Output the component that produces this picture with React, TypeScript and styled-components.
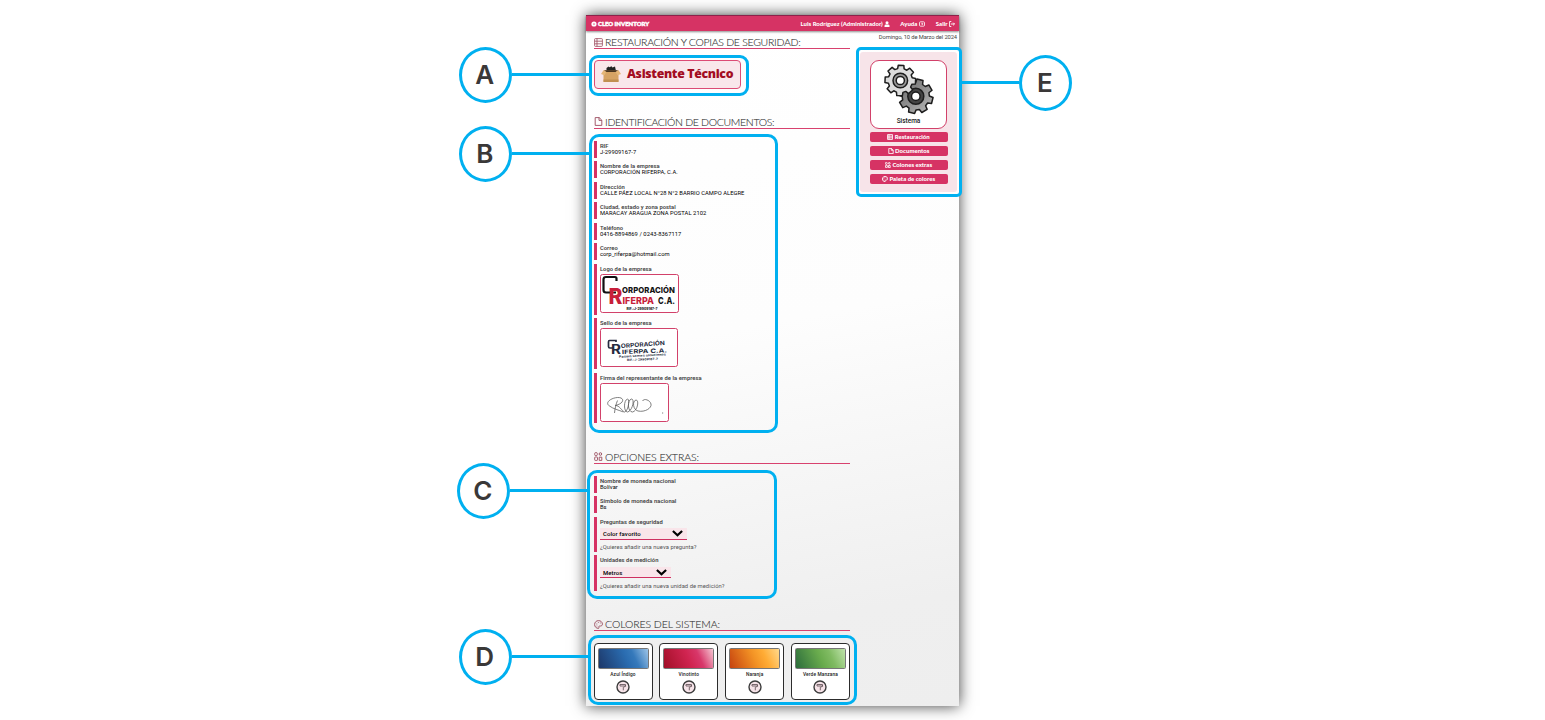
import React from 'react';
import styled, { createGlobalStyle } from 'styled-components';

const Global = createGlobalStyle`
  * { box-sizing: border-box; }
  body { margin: 0; background: #fff; }
  svg { display: block; flex: none; }
`;

const pink = '#d63364';
const blue = '#00b0f0';

const Stage = styled.div`
  position: relative;
  width: 1545px;
  height: 720px;
  overflow: hidden;
  padding: 15px 0 0 586px;
  font-family: Roboto, 'Liberation Sans', sans-serif;
`;
const Page = styled.div`
  width: 373px;
  height: 691px;
  background: linear-gradient(170deg, #fff 0%, #fdfdfd 45%, #efefef 85%, #eee 100%);
  box-shadow: 0 0 14px rgba(0, 0, 0, 0.75);
`;
const TopBar = styled.header`
  display: flex;
  align-items: center;
  height: 16px;
  padding: 1px 4px 0 5px;
  border-top: 1px solid #8d2149;
  background: ${pink};
  box-shadow: 0 1px 2px rgba(0, 0, 0, 0.45);
  color: #fff;
  font: 900 6px/8px Lato, sans-serif;
`;
const Brand = styled.div`
  display: flex;
  align-items: center;
  gap: 1px;
  margin-right: auto;
  letter-spacing: -0.03px;
  -webkit-text-stroke: 0.45px #fff;
`;
const NavItem = styled.div<{ $gap: number }>`
  display: flex;
  align-items: center;
  gap: 1.5px;
  margin-left: ${p => p.$gap}px;
  white-space: nowrap;
`;
const Body = styled.div`
  display: flex;
  justify-content: space-between;
`;
const Main = styled.main`
  width: 264px;
  padding: 5px 0 0 7.5px;
`;
const Aside = styled.aside`
  width: 100px;
  padding: 3px 2px 0 0;
`;
const DateLine = styled.div`
  height: 18px;
  color: #444;
  font-size: 5.8px;
  line-height: 7px;
  letter-spacing: -0.12px;
  text-align: right;
  white-space: nowrap;
`;
const Heading = styled.h2<{ $top?: number; $ls: number }>`
  display: flex;
  align-items: center;
  gap: 2.5px;
  height: 13px;
  margin: ${p => p.$top ?? 0}px 0 ${p => (p.$top ? 11.8 : 11)}px;
  border-bottom: 1.5px solid #d8416e;
  color: #333;
  font: 300 10.5px/12px Lato, sans-serif;
  letter-spacing: ${p => p.$ls}px;
  -webkit-text-stroke: 0.12px #444;
  white-space: nowrap;
`;
const Assistant = styled.button`
  display: flex;
  align-items: center;
  gap: 6.5px;
  width: 147px;
  height: 29px;
  padding: 0 0 1px 6px;
  border: 1.5px solid #dc4b75;
  border-radius: 4px;
  background: #f9e7eb;
  color: #a30d22;
  font: 800 12.3px/16px 'Open Sans', sans-serif;
  letter-spacing: -0.33px;
  white-space: nowrap;
`;
const Fields = styled.div`
  display: flex;
  flex-direction: column;
  gap: 3.5px;
`;
const FieldBox = styled.div<{ $h: number; $mt?: number }>`
  height: ${p => p.$h}px;
  margin-top: ${p => p.$mt ?? 0}px;
  padding: 2px 0 0 3.4px;
  border-left: 3.3px solid ${pink};
  color: #000;
  font-size: 5.8px;
  line-height: 6px;
  letter-spacing: 0.05px;
  white-space: nowrap;
`;
const Label = styled.div`
  color: #444;
  font-weight: 600;
`;
const Value = styled.div``;
const Hint = styled.div`
  margin-top: 4.7px;
  color: #555;
`;
const Select = styled.div<{ $w: number }>`
  display: flex;
  align-items: center;
  justify-content: space-between;
  width: ${p => p.$w}px;
  height: 11.5px;
  margin-top: 3.5px;
  padding: 1px 4px 0 3px;
  border-bottom: 1.5px solid #cf2f60;
  background: #f9e5ea;
  color: #000;
  font-size: 6px;
  font-weight: 500;
  letter-spacing: 0.1px;
`;
const Frame = styled.div<{ $w: number }>`
  width: ${p => p.$w}px;
  height: 39px;
  margin-top: 2.3px;
  border: 1.5px solid #d2416a;
  border-radius: 2.5px;
  background: #fff;
`;
const Swatches = styled.div`
  display: flex;
  justify-content: space-between;
`;
const SwatchCard = styled.div`
  display: flex;
  flex-direction: column;
  align-items: center;
  width: 59px;
  height: 56.5px;
  padding-top: 3.3px;
  border: 1.6px solid #2c2c2c;
  border-radius: 4px;
  background: #fff;
  color: #222;
  font-size: 4.8px;
  font-weight: 500;
  line-height: 6px;
  letter-spacing: 0.12px;
`;
const Swatch = styled.div<{ $bg: string }>`
  width: 51px;
  height: 21px;
  margin-bottom: 3.5px;
  border: 1px solid #777;
  border-radius: 1.5px;
  background: linear-gradient(65deg, ${p => p.$bg});
`;
const SwatchButton = styled.div`
  margin-top: 2px;
`;
const Panel = styled.div`
  display: flex;
  flex-direction: column;
  align-items: center;
  gap: 4px;
  width: 97px;
  height: 140px;
  margin-left: 1px;
  padding-top: 8px;
  border-radius: 3px;
  background: #f7e4e9;
`;
const SystemCard = styled.div`
  display: flex;
  flex-direction: column;
  align-items: center;
  width: 77px;
  height: 68.5px;
  margin-bottom: -0.7px;
  padding-top: 3px;
  border: 1.5px solid #d2416a;
  border-radius: 9px;
  background: #fff;
  color: #222;
  font-size: 6.5px;
  font-weight: 500;
  line-height: 10px;
`;
const PanelButton = styled.button`
  display: flex;
  align-items: center;
  justify-content: center;
  gap: 1.5px;
  width: 78px;
  height: 10px;
  padding: 0;
  border: 0;
  border-radius: 2px;
  background: ${pink};
  color: #fff;
  font: 900 6px/8px Lato, sans-serif;
  white-space: nowrap;
`;

/* Annotation overlay */
const Outline = styled.div<{ $x: number; $y: number; $w: number; $h: number; $r: number }>`
  position: absolute;
  left: ${p => p.$x}px;
  top: ${p => p.$y}px;
  width: ${p => p.$w}px;
  height: ${p => p.$h}px;
  border: 3px solid ${blue};
  border-radius: ${p => p.$r}px;
`;
const Callout = styled.div<{ $x: number; $y: number; $flip?: boolean }>`
  position: absolute;
  left: ${p => p.$x}px;
  top: ${p => p.$y}px;
  display: flex;
  flex-direction: ${p => (p.$flip ? 'row-reverse' : 'row')};
  align-items: center;
`;
const Bubble = styled.div`
  display: flex;
  align-items: center;
  justify-content: center;
  width: 53px;
  height: 56px;
  padding-right: 1.5px;
  border: 3px solid ${blue};
  border-radius: 50%;
  background: #fff;
  color: #3a3838;
  font: 600 26px/30px Inter, sans-serif;
`;
const Leader = styled.div<{ $w: number }>`
  width: ${p => p.$w}px;
  height: 3px;
  margin-top: -1px;
  background: ${blue};
`;

const TableIcon = ({ s = 9, w = 0.8 }: { s?: number; w?: number }) => (
  <svg width={s} height={s} viewBox="0 0 9 9" fill="none" stroke="currentColor" strokeWidth={w}>
    <rect x=".6" y=".6" width="7.8" height="7.8" rx=".8" /><path d="M.6 3.2h7.8M.6 5.8h7.8M3 .6v7.8" />
  </svg>
);
const FileIcon = ({ s = 9, w = 0.9 }: { s?: number; w?: number }) => (
  <svg width={s} height={s} viewBox="0 0 9 9" fill="none" stroke="currentColor" strokeWidth={w}>
    <path d="M1.2.6h4L7.8 3.2v5.2H1.2zM5 .6v2.8h2.8" />
  </svg>
);
const ExtrasIcon = ({ s = 9, w = 0.9 }: { s?: number; w?: number }) => (
  <svg width={s} height={s} viewBox="0 0 9 9" fill="none" stroke="currentColor" strokeWidth={w}>
    <rect x=".7" y=".6" width="2.6" height="3" rx="1" /><rect x=".7" y="5" width="2.8" height="3.4" rx=".6" />
    <circle cx="6.4" cy="2" r="1.3" /><path d="M5.2 8.4V5.2h2.6v3.2z" />
  </svg>
);
const PaletteIcon = ({ s = 9, w = 0.9 }: { s?: number; w?: number }) => (
  <svg width={s} height={s} viewBox="0 0 9 9" fill="none" stroke="currentColor" strokeWidth={w}>
    <path d="M4.6 8.4C2.2 8.4.6 6.7.6 4.5S2.3.6 4.5.6s3.9 1.5 3.9 3.5c0 1.4-.9 1.9-2 1.9-1.5 0-1.9.4-1.5 1.2.3.7.1 1.2-.3 1.2z" />
    <path d="M2.4 4h.9M3.9 2.4h.9M5.9 3h.8M2.6 6h.7" />
  </svg>
);
const HeadIcon = styled.span`
  color: #9a4a5c;
`;
const Chevron = () => (
  <svg width="11" height="7" viewBox="0 0 11 7" fill="none" stroke="#000" strokeWidth="2.2"><path d="M.9 1l4.6 4.3L10.1 1" /></svg>
);

const gearPath = (cx: number, cy: number, inner: number, outer: number, offset: number) => {
  const pts: string[] = [];
  for (let i = 0; i < 8; i++) {
    const a = offset + (i * Math.PI) / 4;
    [[-0.27, inner], [-0.18, outer], [0.18, outer], [0.27, inner]].forEach(([d, r]) =>
      pts.push(`${(cx + r * Math.cos(a + d)).toFixed(2)} ${(cy + r * Math.sin(a + d)).toFixed(2)}`));
  }
  return `M${pts.join('L')}Z`;
};
const Gears = () => (
  <svg width="52" height="52" viewBox="0 0 52 52" strokeLinejoin="round">
    <defs>
      <linearGradient id="dark" x1="0" y1="0" x2="1" y2="1"><stop offset="0" stopColor="#666" /><stop offset="1" stopColor="#bbb" /></linearGradient>
    </defs>
    <g stroke="#1d1d1d" strokeWidth="1.5">
      <path d={gearPath(32.8, 32.3, 13.6, 17.3, 0.25)} fill="url(#dark)" />
      <circle cx="32.8" cy="32.3" r="8" fill="#444" /><circle cx="32.8" cy="32.3" r="4.3" fill="#fff" />
      <path d={gearPath(17.3, 16.5, 12.2, 15.5, 0.05)} fill="#dcdcdc" />
      <circle cx="17.3" cy="16.5" r="7.3" fill="#999" /><circle cx="17.3" cy="16.5" r="4.1" fill="#fff" />
    </g>
  </svg>
);
const BoxIcon = () => (
  <svg width="20" height="18" viewBox="0 0 20 18">
    <path d="M5.5 6V3l2-1.5 1 .8 2-1 1 1.2 2.5-1L15 6z" fill="#222" />
    <path d="M2.5 5.5h15v10.8q0 .7-.7.7H3.200q-.7 0-.7-.7z" fill="#d6a364" />
    <path d="M3 5.200h14l-2 1.800H5z" fill="#4a3520" />
    <path d="M2.5 5.200L0 9l3.300 1.300L5.500 7zM17.500 5.200L20 9l-3.300 1.300L14.500 7z" fill="#e5b678" />
    <path d="M2.5 14.5h15V17h-15z" fill="#c18f51" />
  </svg>
);
const Logo = () => (
  <svg width="76" height="36" viewBox="0 0 76 36" fontFamily="Inter" fontWeight="800">
    <path d="M15.5 6V3.5Q15.500 2 14 2H5Q2.500 2 2.500 4.500v10.500Q2.500 17.500 5 17.500h10" fill="none" stroke="#111" strokeWidth="2.2" />
    <text x="7.5" y="28.500" fontSize="21" fill="#c81f3a" textLength="14" lengthAdjust="spacingAndGlyphs">R</text>
    <text x="21" y="17.800" fontSize="8" fill="#151515" textLength="53" lengthAdjust="spacingAndGlyphs">ORPORACIÓN</text>
    <text x="21.5" y="28.500" fontSize="9" fill="#c81f3a" textLength="31.5" lengthAdjust="spacingAndGlyphs">IFERPA</text>
    <text x="57" y="28.500" fontSize="9" fill="#151515" textLength="17" lengthAdjust="spacingAndGlyphs">C.A.</text>
    <text x="25.5" y="34.500" fontSize="3.8" fill="#151515" textLength="31" lengthAdjust="spacingAndGlyphs">RIF.:J-29909167-7</text>
  </svg>
);
const Seal = () => (
  <svg width="75" height="36" viewBox="0 0 75 36" fontFamily="Inter" fontWeight="700" fill="#262b40">
    <path d="M15 13v-1.500H8.500Q7.500 11.500 7.500 13v4.500q0 1.500 1.500 1.500h4" fill="none" stroke="#262b40" strokeWidth="1.7" />
    <text x="10" y="25" fontSize="13" textLength="10" lengthAdjust="spacingAndGlyphs">R</text>
    <text x="20" y="19" fontSize="5.8" textLength="44" lengthAdjust="spacingAndGlyphs" transform="rotate(-4 20 18)">ORPORACIÓN</text>
    <text x="21" y="25" fontSize="5.8" textLength="45" lengthAdjust="spacingAndGlyphs" transform="rotate(-2 20 24)">IFERPA C.A.</text>
    <text x="18" y="28.800" fontSize="3" textLength="47" lengthAdjust="spacingAndGlyphs" transform="rotate(-3 18 28)">Pasión somos soluciones</text>
    <text x="26" y="32" fontSize="3" textLength="31" lengthAdjust="spacingAndGlyphs" transform="rotate(-2 26 32)">RIF.:J-29909167-7</text>
  </svg>
);
const Signature = () => (
  <svg width="66" height="36" viewBox="0 0 66 36" fill="none" stroke="#555" strokeWidth=".75">
    <path d="M13.5 29c.5-5 1.500-9 3-12.500M8.500 22c-5-3 1-8 8-8.500 6-.3 7 4 2 6.500-3 1.500-5 1.500-4 1.500 4 0 6 5 9 6.500 4-1 5.500-13 3-13-4 1-4 13 0 13 5-1 7.500-13 4-13-4.500 1-4 13 1 13 5-1 7-12 3.500-12-4 1-3 10 2 11 7 1.500 14-3 13-7-1-4-7-6-8.500-3M8.500 22c4 3 9 4 14 6" />
    <path d="M61 29h1.200" />
  </svg>
);
const ApplyIcon = () => (
  <svg width="14" height="14" viewBox="0 0 14 14" fill="none">
    <circle cx="7" cy="7" r="6" fill="#f6e3e8" stroke="#3c3c3c" strokeWidth="1.4" />
    <path d="M4 4.500h5.500v1.500H4zM9.500 5.200q1.300 1.300-2.200 2v3.100" stroke="#6b5a60" strokeWidth=".9" />
  </svg>
);

const textFields = [
  ['RIF', 'J-29909167-7'],
  ['Nombre de la empresa', 'CORPORACIÓN RIFERPA, C.A.'],
  ['Dirección', 'CALLE PÁEZ LOCAL N°28 N°2 BARRIO CAMPO ALEGRE'],
  ['Ciudad, estado y zona postal', 'MARACAY ARAGUA ZONA POSTAL 2102'],
  ['Teléfono', '0416-8894869 / 0243-8367117'],
  ['Correo', 'corp_riferpa@hotmail.com'],
];
const themes = [
  ['Azul Índigo', '#1d3768, #2a6cb0 55%, #3579bb 70%, #9cc4e8'],
  ['Vinotinto', '#a10f27, #d02450 50%, #d8376a 70%, #f5c5d2'],
  ['Naranja', '#c5420f, #f39325 50%, #ffac35 70%, #ffd98c'],
  ['Verde Manzana', '#2c6c3c, #69ab4d 50%, #80bb62 70%, #bfe3ab'],
];
const callouts = [
  ['A', 459, 47, 77],
  ['B', 459, 126, 77],
  ['C', 457, 463, 78],
  ['D', 459, 629, 77],
] as const;

export default function App() {
  return (
    <Stage>
      <Global />
      <Page>
        <TopBar>
          <Brand>
            <svg width="6" height="6" viewBox="0 0 6 6"><circle cx="3" cy="3" r="2.6" fill="#fff" /><path d="M2 3.500L3 2l1 1.500z" fill={pink} /></svg>
            CLEO INVENTORY
          </Brand>
          <NavItem $gap={0}>
            Luis Rodríguez (Administrador)
            <svg width="6" height="6" viewBox="0 0 6 6" fill="#fff"><circle cx="3" cy="1.7" r="1.5" /><path d="M.5 6V4.800q0-1.300 1.500-1.300h2q1.500 0 1.500 1.300V6z" /></svg>
          </NavItem>
          <NavItem $gap={10}>
            Ayuda
            <svg width="6" height="6" viewBox="0 0 6 6" fill="none" stroke="#fff" strokeWidth=".8"><rect x=".5" y=".8" width="5" height="4.4" rx="1" /><path d="M2.300 2.300h1.400v1H3v.8" /></svg>
          </NavItem>
          <NavItem $gap={11}>
            Salir
            <svg width="6" height="6" viewBox="0 0 6 6" fill="none" stroke="#fff" strokeWidth=".9"><path d="M2.300.5H.6v5h1.700M2 3h3.500M4.200 1.700L5.500 3 4.200 4.300" /></svg>
          </NavItem>
        </TopBar>
        <Body>
          <Main>
            <Heading $ls={-0.29}><HeadIcon><TableIcon /></HeadIcon>RESTAURACIÓN Y COPIAS DE SEGURIDAD:</Heading>
            <Assistant><BoxIcon />Asistente Técnico</Assistant>

            <Heading $top={26.9} $ls={-0.32}><HeadIcon><FileIcon /></HeadIcon>IDENTIFICACIÓN DE DOCUMENTOS:</Heading>
            <Fields>
              {textFields.map(([label, value]) => (
                <FieldBox key={label} $h={17}><Label>{label}</Label><Value>{value}</Value></FieldBox>
              ))}
              <FieldBox $h={51}><Label>Logo de la empresa</Label><Frame $w={79}><Logo /></Frame></FieldBox>
              <FieldBox $h={50.5}><Label>Sello de la empresa</Label><Frame $w={78}><Seal /></Frame></FieldBox>
              <FieldBox $h={50.5} $mt={0.5}><Label>Firma del representante de la empresa</Label><Frame $w={69}><Signature /></Frame></FieldBox>
            </Fields>

            <Heading $top={27.6} $ls={-0.07}><HeadIcon><ExtrasIcon /></HeadIcon>OPCIONES EXTRAS:</Heading>
            <Fields>
              <FieldBox $h={17}><Label>Nombre de moneda nacional</Label><Value>Bolívar</Value></FieldBox>
              <FieldBox $h={17}><Label>Símbolo de moneda nacional</Label><Value>Bs</Value></FieldBox>
              <FieldBox $h={35.3}>
                <Label>Preguntas de seguridad</Label>
                <Select $w={87.5}>Color favorito<Chevron /></Select>
                <Hint>¿Quieres añadir una nueva pregunta?</Hint>
              </FieldBox>
              <FieldBox $h={35.3}>
                <Label>Unidades de medición</Label>
                <Select $w={71}>Metros<Chevron /></Select>
                <Hint>¿Quieres añadir una nueva unidad de medición?</Hint>
              </FieldBox>
            </Fields>

            <Heading $top={27.8} $ls={-0.07}><HeadIcon><PaletteIcon /></HeadIcon>COLORES DEL SISTEMA:</Heading>
            <Swatches>
              {themes.map(([name, bg]) => (
                <SwatchCard key={name}><Swatch $bg={bg} />{name}<SwatchButton><ApplyIcon /></SwatchButton></SwatchCard>
              ))}
            </Swatches>
          </Main>
          <Aside>
            <DateLine>Domingo, 10 de Marzo del 2024</DateLine>
            <Panel>
              <SystemCard><Gears />Sistema</SystemCard>
              <PanelButton><TableIcon s={6} w={1.3} />Restauración</PanelButton>
              <PanelButton><FileIcon s={6} w={1.3} />Documentos</PanelButton>
              <PanelButton><ExtrasIcon s={6} w={1.3} />Colones extras</PanelButton>
              <PanelButton><PaletteIcon s={6} w={1.3} />Paleta de colores</PanelButton>
            </Panel>
          </Aside>
        </Body>
      </Page>

      <Outline $x={589} $y={55} $w={160} $h={41} $r={9} />
      <Outline $x={589} $y={134} $w={189} $h={299} $r={10} />
      <Outline $x={587} $y={470} $w={190} $h={129} $r={10} />
      <Outline $x={588} $y={635} $w={269} $h={70} $r={10} />
      <Outline $x={856} $y={47} $w={106} $h={150} $r={5} />
      {callouts.map(([letter, x, y, w]) => (
        <Callout key={letter} $x={x} $y={y}><Bubble>{letter}</Bubble><Leader $w={w} /></Callout>
      ))}
      <Callout $x={962} $y={55} $flip><Bubble>E</Bubble><Leader $w={57} /></Callout>
    </Stage>
  );
}
